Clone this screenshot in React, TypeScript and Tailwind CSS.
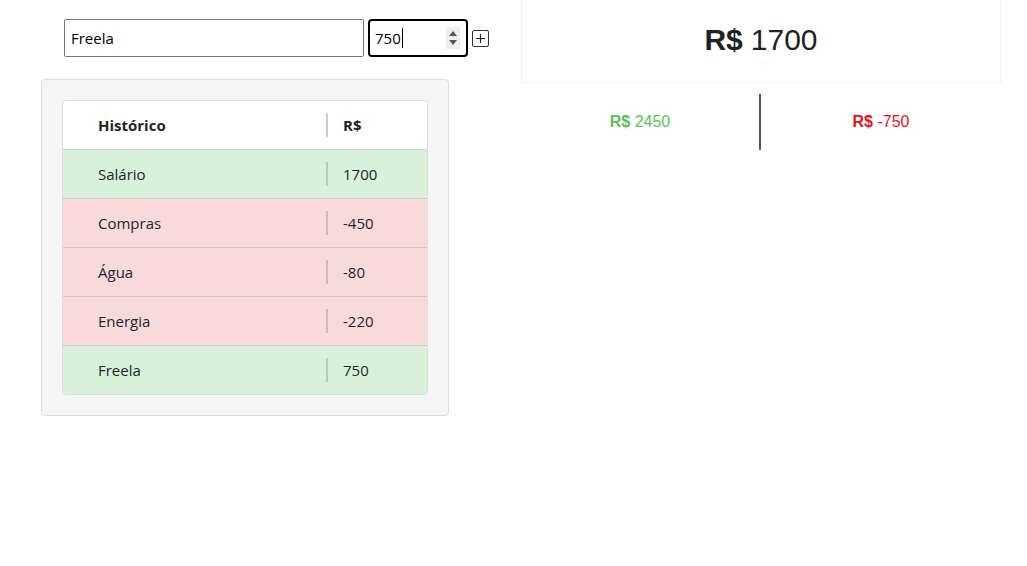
import { useState } from "react";

type Entry = {
  id: number;
  name: string;
  value: number;
};

const ui = { fontFamily: "'Open Sans', 'Noto Sans', sans-serif" };
const arial = { fontFamily: "'Liberation Sans', Arial, sans-serif" };

export default function App() {
  const [entries] = useState<Entry[]>([
    { id: 1, name: "Salário", value: 1700 },
    { id: 2, name: "Compras", value: -450 },
    { id: 3, name: "Água", value: -80 },
    { id: 4, name: "Energia", value: -220 },
    { id: 5, name: "Freela", value: 750 },
  ]);
  const [name, setName] = useState("Freela");

  const income = entries.filter((e) => e.value > 0).reduce((s, e) => s + e.value, 0);
  const expense = entries.filter((e) => e.value < 0).reduce((s, e) => s + e.value, 0);

  return (
    <div className="flex bg-white min-h-[566px] w-[1027px]" style={ui}>
      {/* Left column */}
      <div className="w-[521px] shrink-0">
        <div className="flex items-center pl-[64px] pt-[19px]">
          <input
            className="w-[300px] h-[38px] border border-[#767676] rounded-[2px] px-[6px] text-[15px] text-black outline-none"
            value={name}
            onChange={(e) => setName(e.target.value)}
            style={ui}
          />
          <div className="ml-[4px] w-[100px] h-[38px] border-2 border-black rounded-[4px] flex items-center pl-[5px] pr-[6px] text-[15px] text-black">
            <span>750</span>
            <span className="w-px h-[20px] bg-black ml-px" />
            <div className="ml-auto w-[14px] h-[22px] bg-[#efefef] flex flex-col items-center justify-center gap-[4px]">
              <svg width="8" height="5" viewBox="0 0 8 5"><path d="M0 5 L4 0 L8 5 Z" fill="#555" /></svg>
              <svg width="8" height="5" viewBox="0 0 8 5"><path d="M0 0 L4 5 L8 0 Z" fill="#555" /></svg>
            </div>
          </div>
          <button className="ml-[4px] w-[17px] h-[17px] border border-[#333] rounded-[2px] flex items-center justify-center">
            <svg width="11" height="11" viewBox="0 0 11 11">
              <path d="M5.5 1 V10 M1 5.5 H10" stroke="#222" strokeWidth="1.2" />
            </svg>
          </button>
        </div>

        {/* Histórico panel */}
        <div className="ml-[41px] mt-[22px] w-[408px] bg-[#f5f5f5] border border-[#dddddd] rounded-[4px] p-[20px]">
          <div className="bg-white border border-[#dddddd] rounded-[4px] overflow-hidden">
            <div className="flex items-center h-[49px] border-b border-[#d0d0d0] text-[15px] font-bold text-[#212529]">
              <div className="w-[263px] pl-[35px]">Histórico</div>
              <div className="w-[2px] h-[24px] bg-[#cccccc]" />
              <div className="pl-[15px]">R$</div>
            </div>
            {entries.map((e, i) => {
              const last = i === entries.length - 1;
              return (
                <div
                  key={e.id}
                  className={
                    "flex items-center text-[15px] text-[#212529] " +
                    (last ? "h-[48px] " : "h-[49px] border-b border-[#d0c8c8] ") +
                    (e.value > 0 ? "bg-[#d8f1da]" : "bg-[#f8dadb]")
                  }
                >
                  <div className="w-[263px] pl-[35px]">{e.name}</div>
                  <div className={"w-[2px] h-[24px] " + (e.value > 0 ? "bg-[#b9c9ba]" : "bg-[#d3b9bb]")} />
                  <div className="pl-[15px]">{e.value}</div>
                </div>
              );
            })}
          </div>
        </div>
      </div>

      {/* Right column */}
      <div className="w-[480px] shrink-0" style={arial}>
        <div className="h-[84px] -mt-px border border-[#f0f0f0] flex items-center justify-center pb-[3px] text-[30px] text-[#222222]">
          <span className="font-bold">R$</span>
          <span className="ml-[8px]">{income + expense}</span>
        </div>
        <div className="flex items-center mt-[11px] h-[56px]">
          <div className="w-[238px] text-center text-[16px] text-[#55c455]">
            <span className="font-bold">R$</span> {income}
          </div>
          <div className="w-[2px] h-[56px] bg-[#555555]" />
          <div className="flex-1 text-center text-[16px] text-[#e8111b]">
            <span className="font-bold">R$</span> {expense}
          </div>
        </div>
      </div>
    </div>
  );
}
